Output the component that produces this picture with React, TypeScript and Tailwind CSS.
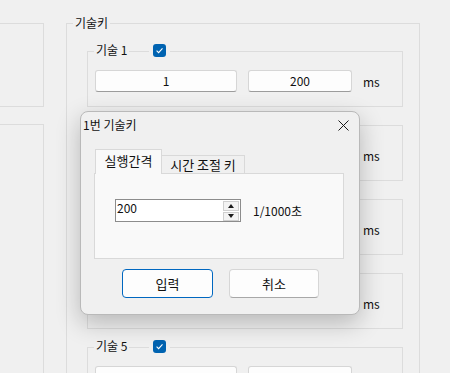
import React from "react";

const font = { fontFamily: '"Noto Sans CJK KR", "Noto Sans", sans-serif' };

function Check() {
  return (
    <div className="w-[13px] h-[13px] rounded-[3px] bg-[#0063b1] flex items-center justify-center">
      <svg width="9" height="9" viewBox="0 0 9 9">
        <path d="M1.6 4.7 L3.6 6.6 L7.5 2.4" fill="none" stroke="#ffffff" strokeWidth="1.1" />
      </svg>
    </div>
  );
}

function WinBtn({ children, w }: { children?: React.ReactNode; w: string }) {
  return (
    <div
      className={`${w} h-[22px] flex items-center justify-center bg-[#fdfdfd] border border-[#d6d6d6] border-b-[#9c9c9c] rounded-[3px] leading-[16px]`}
    >
      {children}
    </div>
  );
}

function Skill({ n, label, values, ms }: { n: number; label: boolean; values: boolean; ms: boolean }) {
  return (
    <div className="relative w-[316px] h-[56px] shrink-0 border border-[#dcdcdc]">
      {label && (
        <div className="absolute left-[6px] top-[-10px] px-[2px] bg-[#f0f0f0] leading-[16px]">기술 {n}</div>
      )}
      <div className="absolute left-[61px] top-[-8px] px-[4px] bg-[#f0f0f0]">
        <Check />
      </div>
      <div className="flex items-center pt-[18px] pl-[7px]">
        <WinBtn w="w-[142px]">{values ? "1" : null}</WinBtn>
        <div className="ml-[11px]">
          <WinBtn w="w-[104px]">{values ? "200" : null}</WinBtn>
        </div>
        <div className="ml-[11px] w-[20px] leading-[16px] mt-[2px]">{ms ? "ms" : null}</div>
      </div>
    </div>
  );
}

export default function App() {
  return (
    <div
      className="relative w-[450px] h-[373px] overflow-hidden bg-[#f0f0f0] text-[12px] text-[#111111]"
      style={font}
    >
      <div className="flex items-start">
        {/* left column */}
        <div className="ml-[-20px] w-[64px] flex flex-col shrink-0">
          <div className="mt-[23px] h-[84px] border border-[#dcdcdc]" />
          <div className="mt-[17px] h-[300px] border border-[#dcdcdc]" />
        </div>
        {/* main group */}
        <div className="relative mt-[23px] ml-[22px] w-[354px] h-[400px] shrink-0 border border-[#dcdcdc]">
          <div className="absolute left-[6px] top-[-9px] px-[2px] bg-[#f0f0f0] leading-[16px]">기술키</div>
          <div className="flex flex-col gap-[18px] pl-[20px] pt-[27px]">
            <Skill n={1} label values ms />
            <Skill n={2} label={false} values={false} ms />
            <Skill n={3} label={false} values={false} ms />
            <Skill n={4} label={false} values={false} ms />
            <Skill n={5} label values={false} ms={false} />
          </div>
        </div>
      </div>

      {/* dialog */}
      <div className="absolute left-[80px] top-[111px] w-[280px] h-[204px] rounded-[8px] border border-[#b9b9b9] bg-[#f0f0f0] shadow-[0_8px_24px_rgba(0,0,0,0.24)] flex flex-col">
        <div className="h-[26px] flex items-center justify-between pl-[2px] pr-[10px]">
          <span className="leading-[16px]">1번 기술키</span>
          <svg width="11" height="11" viewBox="0 0 11 11">
            <path d="M0.5 0.5 L10.5 10.5 M10.5 0.5 L0.5 10.5" stroke="#1b1b1b" strokeWidth="1" />
          </svg>
        </div>
        <div className="mt-[11px] ml-[14px] h-[25px] flex items-end text-[13px]">
          <div className="relative z-10 w-[67px] h-[25px] border border-b-0 border-[#d9d9d9] bg-[#f9f9f9] flex items-center justify-center leading-[16px] pb-[2px]">
            실행간격
          </div>
          <div className="w-[83px] h-[19px] border border-b-0 border-l-0 border-[#d9d9d9] bg-[#f0f0f0] flex items-center justify-center leading-[16px]">
            시간 조절 키
          </div>
        </div>
        <div className="ml-[13px] mt-[-1px] w-[250px] h-[86px] border border-[#d9d9d9] bg-[#f9f9f9] pt-[25px] pl-[20px]">
          <div className="flex items-center">
            <div className="relative w-[126px] h-[23px] border border-[#8c8c8c] bg-white">
              <div className="pl-[1px] pt-[1px] leading-[14px]">200</div>
              <div className="absolute right-[1px] top-[1px] w-[16px] flex flex-col gap-[1px]">
                <div className="h-[9.5px] border border-[#cfcfcf] bg-[#f3f3f3] flex items-center justify-center">
                  <svg width="6" height="4" viewBox="0 0 6 4">
                    <path d="M3 0 L6 4 L0 4 Z" fill="#1b1b1b" />
                  </svg>
                </div>
                <div className="h-[9.5px] border border-[#cfcfcf] bg-[#f3f3f3] flex items-center justify-center">
                  <svg width="6" height="4" viewBox="0 0 6 4">
                    <path d="M0 0 L6 0 L3 4 Z" fill="#1b1b1b" />
                  </svg>
                </div>
              </div>
            </div>
            <div className="ml-[12px] leading-[16px]">1/1000초</div>
          </div>
        </div>
        <div className="mt-[10px] ml-[41px] flex gap-[16px] text-[13px]">
          <div className="w-[91px] h-[29px] rounded-[4px] border border-[#0067c0] bg-[#fdfdfd] flex items-center justify-center leading-[16px]">
            입력
          </div>
          <div className="w-[90px] h-[29px] rounded-[4px] border border-[#d6d6d6] border-b-[#a8a8a8] bg-[#fdfdfd] flex items-center justify-center leading-[16px]">
            취소
          </div>
        </div>
      </div>
    </div>
  );
}
